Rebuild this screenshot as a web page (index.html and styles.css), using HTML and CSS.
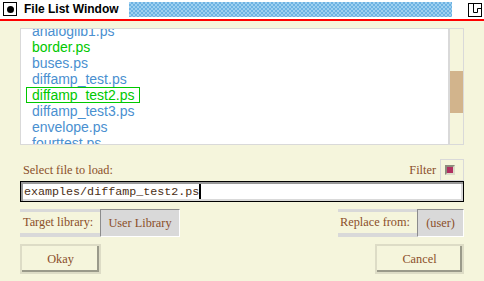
FILE: index.html
```html
<!DOCTYPE html>
<html>

<head>
  <meta charset="UTF-8">
  <title>File List Window</title>
  <link rel="stylesheet" href="styles.css">
</head>

<body>
  <div class="window">
    <div class="titlebar">
      <div class="close-box"><span class="dot"></span></div>
      <div class="title">File List Window</div>
      <div class="stipple"></div>
      <div class="resize-box">
        <svg width="12" height="12" viewBox="0 0 12 12">
          <path d="M4.5 0 V8.5 H8.5 V4.5 H12" fill="none" stroke="#000" />
        </svg>
      </div>
    </div>

    <div class="content">
      <div class="listframe">
        <div class="list">
          <div class="items">
            <div class="item">analoglib1.ps</div>
            <div class="item dir">border.ps</div>
            <div class="item">buses.ps</div>
            <div class="item">diffamp_test.ps</div>
            <div class="item dir selected">diffamp_test2.ps</div>
            <div class="item">diffamp_test3.ps</div>
            <div class="item">envelope.ps</div>
            <div class="item">fourttest.ps</div>
          </div>
        </div>
        <div class="scrollbar">
          <div class="thumb"></div>
        </div>
      </div>

      <div class="select-row">
        <span class="label">Select file to load:</span>
        <span class="filter">
          <span class="label">Filter</span>
          <span class="checkbox"><span class="indicator"></span></span>
        </span>
      </div>

      <div class="entry">
        <span class="entry-text">examples/diffamp_test2.ps</span><span class="cursor"></span>
      </div>

      <div class="option-row">
        <div class="option">
          <span class="option-label">Target library:</span>
          <span class="option-button">User Library</span>
        </div>
        <div class="option">
          <span class="option-label">Replace from:</span>
          <span class="option-button small">(user)</span>
        </div>
      </div>

      <div class="button-row">
        <div class="button okay"><span>Okay</span></div>
        <div class="button cancel"><span>Cancel</span></div>
      </div>
    </div>
  </div>
</body>

</html>
```

FILE: styles.css
```css
* {
  margin: 0px;
  padding: 0px;
  box-sizing: border-box;
}

body {
  width: 484px;
  height: 281px;
  overflow: hidden;
  background-color: #f5f5dc;
  font-family: "Liberation Serif", serif;
  color: #8b4f2a;
}

.titlebar {
  width: 484px;
  height: 21px;
  background-color: white;
  border-bottom: 2px solid #ff0000;
  display: flex;
  align-items: flex-start;
  padding: 2px 0 0 3px;
}

.titlebar > * {
  flex-shrink: 0;
}

.close-box {
  width: 14px;
  height: 14px;
  border: 1px solid black;
  display: flex;
  justify-content: center;
  align-items: center;
}

.dot {
  width: 7px;
  height: 7px;
  border-radius: 50%;
  background-color: black;
}

.title {
  font-family: "Liberation Sans", sans-serif;
  font-weight: bold;
  font-size: 12px;
  color: black;
  margin-left: 7px;
  line-height: 15px;
  width: 105px;
  white-space: nowrap;
}

.stipple {
  width: 323px;
  height: 15px;
  background: repeating-conic-gradient(#6db2e2 0 25%, #9dd0f0 0 50%) 0 0 / 4px 4px;
}

.resize-box {
  width: 14px;
  height: 14px;
  margin-left: 16px;
  margin-top: 1px;
  border: 1px solid black;
  background-color: white;
}

.resize-box svg {
  display: block;
}

.content {
  padding: 7px 20px 0 20px;
}

.listframe {
  display: flex;
  height: 117px;
  border: 1px solid #d9d9d9;
}

.list {
  flex: 1;
  background-color: white;
  border-right: 2px solid #d9d9d9;
  overflow: hidden;
}

.items {
  margin-top: -6px;
}

.item {
  font-family: "Liberation Sans", sans-serif;
  font-size: 14px;
  line-height: 14px;
  color: #4a90d0;
  margin-left: 5px;
  padding: 0 5px;
  border: 1px solid transparent;
  width: fit-content;
  white-space: nowrap;
}

.item.dir {
  color: #00c800;
}

.item.selected {
  border-color: #00c800;
}

.scrollbar {
  width: 13px;
  padding-top: 42px;
}

.thumb {
  height: 42px;
  background-color: #d2b48c;
}

.select-row {
  margin-top: 14px;
  height: 22px;
  display: flex;
  justify-content: space-between;
  align-items: center;
  padding-left: 3px;
}

.label {
  font-size: 12.3px;
  white-space: nowrap;
}

.filter {
  display: flex;
  align-items: center;
  gap: 4px;
}

.checkbox {
  width: 24px;
  height: 22px;
  border: 1px solid #d9d9d9;
  display: flex;
  justify-content: center;
  align-items: center;
  padding-right: 5px;
}

.indicator {
  width: 10px;
  height: 10px;
  border: 2px solid;
  border-color: #8c8c7c #dcdcc8 #dcdcc8 #8c8c7c;
  background-color: #b03060;
}

.entry {
  height: 21px;
  border: 1px solid black;
  background-color: white;
  box-shadow: inset 2px 2px 0 #999999, inset -2px -2px 0 #d9d9d9;
  display: flex;
  align-items: center;
  padding-left: 3px;
}

.entry-text {
  font-family: "Liberation Mono", monospace;
  font-size: 11.7px;
  color: #4a2e14;
}

.cursor {
  width: 2px;
  height: 15px;
  background-color: black;
}

.option-row {
  margin-top: 7px;
  display: flex;
  justify-content: space-between;
}

.option {
  display: flex;
  height: 28px;
}

.option-label {
  font-size: 12.3px;
  white-space: nowrap;
  background-color: #f5f5dc;
  border-top: 3px solid #d9d9d9;
  border-bottom: 4px solid #d9d9d9;
  display: flex;
  align-items: center;
  padding-left: 3px;
  width: 80px;
}

.option-button {
  font-size: 12.3px;
  white-space: nowrap;
  background-color: #d9d9d9;
  border: 1px solid;
  border-color: #8c8c8c white white #8c8c8c;
  display: flex;
  justify-content: center;
  align-items: center;
  width: 80px;
}

.option-button.small {
  width: 47px;
}

.option:last-child .option-label {
  width: 79px;
  padding-left: 2px;
}

.button-row {
  margin-top: 7px;
  display: flex;
  justify-content: space-between;
}

.button {
  height: 30px;
  border: 2px solid #dddcc6;
  display: flex;
}

.button span {
  flex: 1;
  font-size: 12.3px;
  display: flex;
  justify-content: center;
  align-items: center;
  box-shadow: inset -2px -2px 0 #9a9a8a;
}

.okay {
  width: 81px;
}

.cancel {
  width: 89px;
}
```
